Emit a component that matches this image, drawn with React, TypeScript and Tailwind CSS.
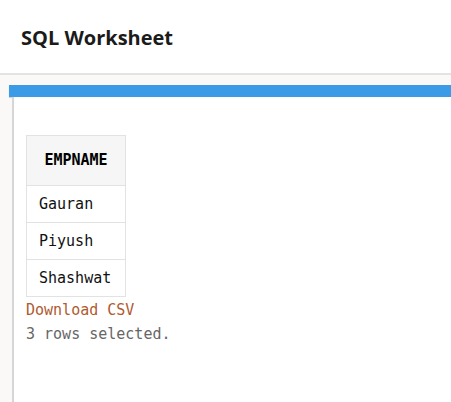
const rows = ['Gauran', 'Piyush', 'Shashwat']

const mono = "font-['DejaVu_Sans_Mono','Liberation_Mono',monospace]"

export default function App() {
  return (
    <div className="flex h-[402px] w-[451px] flex-col overflow-hidden bg-white">
      <header className="h-[75px] shrink-0 border-b-2 border-[#e4e3e2] bg-white pl-[21px] pt-[24px]">
        <h1 className="font-['Open_Sans','Noto_Sans',sans-serif] text-[20px] font-bold leading-[28px] text-[#1b1b1b]">
          SQL Worksheet
        </h1>
      </header>

      <main className="flex flex-1 flex-col bg-[#faf9f8] pl-[9px] pt-[10px]">
        <div className="h-[12px] shrink-0 bg-[#3c9be6] shadow-[0_1px_1px_rgba(0,0,0,0.15)]" />
        <section className="ml-[3px] flex-1 border-l-2 border-[#d6d6d6] bg-white pl-[12px] pt-[38px]">
          <table className={`${mono} w-[100px] border-collapse text-[15px] text-[#111]`}>
            <thead>
              <tr>
                <th className="h-[50px] border border-[#e2e2e2] bg-[#f6f6f6] px-[13px] text-center text-[15px] font-bold text-black">
                  EMPNAME
                </th>
              </tr>
            </thead>
            <tbody>
              {rows.map(name => (
                <tr key={name}>
                  <td className="h-[37px] border border-[#e2e2e2] px-[12px] text-left leading-[17px]">
                    {name}
                  </td>
                </tr>
              ))}
            </tbody>
          </table>
          <p className={`${mono} mt-px text-[15px] leading-[24px] text-[#b05a30]`}>Download CSV</p>
          <p className={`${mono} text-[15px] leading-[24px] text-[#666]`}>3 rows selected.</p>
        </section>
      </main>
    </div>
  )
}
